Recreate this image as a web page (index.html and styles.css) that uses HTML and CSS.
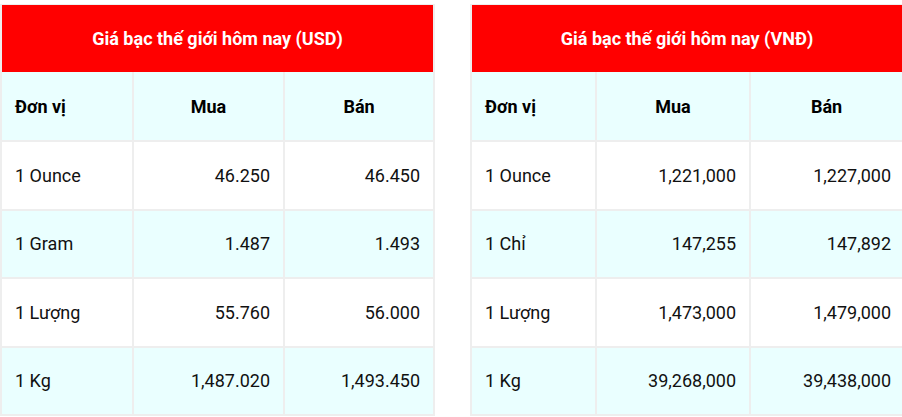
FILE: index.html
```html
<!DOCTYPE html>
<html lang="vi">
<head>
<meta charset="utf-8">
<title>Giá bạc thế giới hôm nay</title>
<link rel="stylesheet" href="styles.css">
</head>
<body>
<div class="wrap">
  <table class="price price-usd">
    <colgroup>
      <col class="c1"><col class="c2"><col class="c3">
    </colgroup>
    <thead>
      <tr><th class="title" colspan="3">Giá bạc thế giới hôm nay (USD)</th></tr>
      <tr class="head"><th class="unit">Đơn vị</th><th>Mua</th><th>Bán</th></tr>
    </thead>
    <tbody>
      <tr><td class="unit">1 Ounce</td><td>46.250</td><td>46.450</td></tr>
      <tr class="alt"><td class="unit">1 Gram</td><td>1.487</td><td>1.493</td></tr>
      <tr><td class="unit">1 Lượng</td><td>55.760</td><td>56.000</td></tr>
      <tr class="alt"><td class="unit">1 Kg</td><td>1,487.020</td><td>1,493.450</td></tr>
    </tbody>
  </table>
  <table class="price price-vnd">
    <colgroup>
      <col class="c1"><col class="c2"><col class="c3">
    </colgroup>
    <thead>
      <tr><th class="title" colspan="3">Giá bạc thế giới hôm nay (VNĐ)</th></tr>
      <tr class="head"><th class="unit">Đơn vị</th><th>Mua</th><th class="last">Bán</th></tr>
    </thead>
    <tbody>
      <tr><td class="unit">1 Ounce</td><td>1,221,000</td><td class="last">1,227,000</td></tr>
      <tr class="alt"><td class="unit">1 Chỉ</td><td>147,255</td><td class="last">147,892</td></tr>
      <tr><td class="unit">1 Lượng</td><td>1,473,000</td><td class="last">1,479,000</td></tr>
      <tr class="alt"><td class="unit">1 Kg</td><td>39,268,000</td><td class="last">39,438,000</td></tr>
    </tbody>
  </table>
</div>
</body>
</html>
```

FILE: styles.css
```css
html, body {
  margin: 0;
  padding: 0;
  background: #ffffff;
  overflow: hidden;
}

body {
  font-family: Roboto, "Liberation Sans", Arial, sans-serif;
  font-size: 18px;
  color: #111111;
}

.wrap {
  display: flex;
  gap: 35px;
  padding-top: 4px;
}

.price {
  flex: none;
  table-layout: fixed;
  border-collapse: separate;
  border-spacing: 0;
  border-left: 2px solid #eeeeee;
  border-top: 1px solid #eeeeee;
}

.price-usd { width: 435px; }
.price-usd .c1 { width: 132px; }
.price-usd .c2 { width: 151px; }
.price-usd .c3 { width: 150px; }

.price-vnd { width: 432px; }
.price-vnd .c1 { width: 125px; }
.price-vnd .c2 { width: 154px; }
.price-vnd .c3 { width: 151px; }

.price th,
.price td {
  border-right: 2px solid #eeeeee;
  border-bottom: 2px solid #eeeeee;
  padding: 0 13px;
  height: 66.5px;
  vertical-align: middle;
  white-space: nowrap;
}

.price-vnd tr > :last-child {
  border-right: none;
}

.price-vnd td.last {
  padding-right: 11px;
}

.price .title {
  background: #ff0000;
  color: #ffffff;
  font-weight: 700;
  text-align: center;
  height: 67px;
  border-bottom: none;
}

.price .head th {
  background: #eaffff;
  font-weight: 700;
  text-align: center;
  height: 68px;
  color: #000000;
}

.price .head th.unit {
  text-align: left;
}

.price td {
  text-align: right;
}

.price td.unit {
  text-align: left;
}

.price tr.alt td {
  background: #eaffff;
}
```
